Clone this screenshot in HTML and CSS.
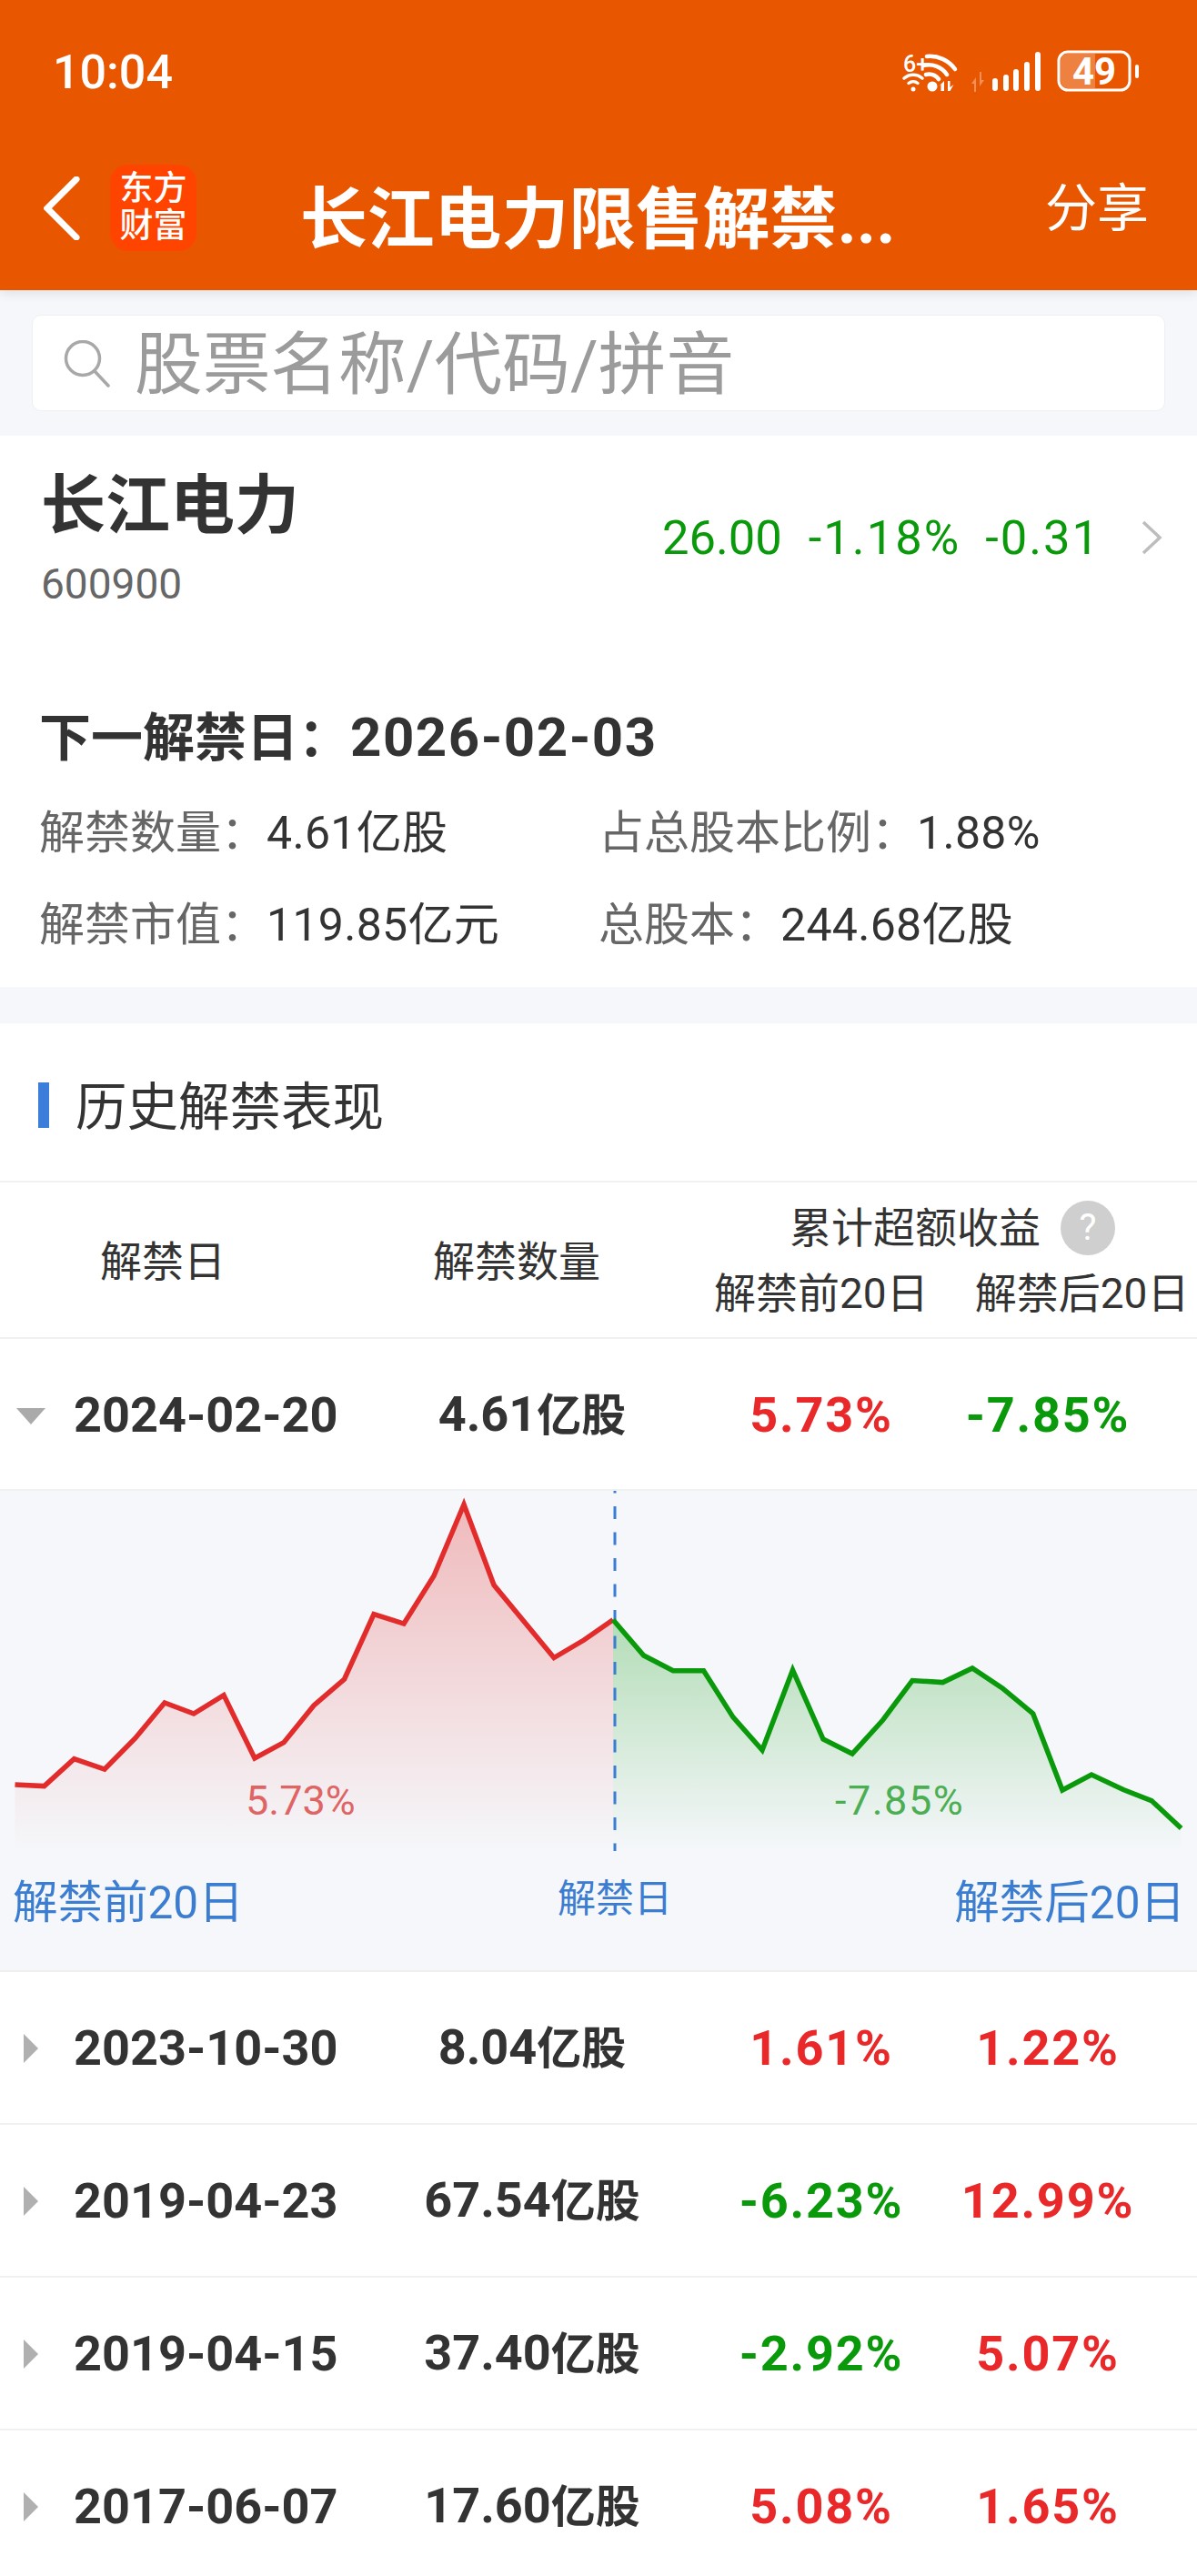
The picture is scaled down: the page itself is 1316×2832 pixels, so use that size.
FILE: index.html
```html
<!DOCTYPE html>
<html lang="zh-CN">
<head>
<meta charset="utf-8">
<title>长江电力限售解禁</title>
<link rel="stylesheet" href="styles.css">
</head>
<body>
<header class="top">
  <div class="status">
    <span class="time">10:04</span>
    <div class="status-icons">
      <svg class="ico-wifi" width="59" height="43" viewBox="0 0 59 43">
        <text x="0" y="21" class="wifi-text">6+</text>
        <g fill="none" stroke="#fff" stroke-linecap="round">
          <path d="M1 28a15 15 0 0 1 20 0" stroke-width="3.500"/>
          <path d="M6 33.500a8 8 0 0 1 10 0" stroke-width="3.500"/>
          <path d="M26 4a34 34 0 0 1 31 14" stroke-width="4.500"/>
          <path d="M22 14a24 24 0 0 1 26 10" stroke-width="4.500"/>
          <path d="M25 24a14 14 0 0 1 14 5" stroke-width="4.500"/>
        </g>
        <circle cx="11" cy="40" r="2.500" fill="#fff"/>
        <circle cx="32" cy="37" r="5.500" fill="#fff"/>
        <path d="M45 31v11h-3.500v-7l-2.500 2zM49 31h2.500v7l4-3-4 7H49z" fill="#fff"/>
      </svg>
      <svg class="ico-signal" width="76" height="44" viewBox="0 0 76 44">
        <path d="M5 44V28l-5 7h3v9zM9 22v16l5-7h-3v-9z" fill="#fff" opacity=".35"/>
        <rect x="23" y="29" width="6" height="14" rx="3" fill="#fff"/>
        <rect x="35" y="25" width="6" height="18" rx="3" fill="#fff"/>
        <rect x="46" y="19" width="6" height="24" rx="3" fill="#fff"/>
        <rect x="58" y="11" width="6" height="32" rx="3" fill="#fff"/>
        <rect x="70" y="0" width="6" height="43" rx="3" fill="#fff"/>
      </svg>
      <svg class="ico-battery" width="90" height="46" viewBox="0 0 90 46">
        <rect x="2" y="2" width="78" height="42" rx="10" fill="none" stroke="#fff" stroke-width="3"/>
        <path d="M4 12a8 8 0 0 1 8-8h30v38H12a8 8 0 0 1-8-8z" fill="#fff" opacity=".25"/>
        <text x="41" y="38" class="battery-text">49</text>
        <rect x="86" y="16" width="4" height="15" rx="2" fill="#fff"/>
      </svg>
    </div>
  </div>
  <nav class="nav">
    <svg class="back" width="40" height="70" viewBox="0 0 40 70"><path d="M36 3 4 35l32 32" fill="none" stroke="#fff" stroke-width="7" stroke-linecap="round" stroke-linejoin="miter"/></svg>
    <div class="logo">东方<br>财富</div>
    <h1 class="title">长江电力限售解禁...</h1>
    <span class="share">分享</span>
  </nav>
</header>

<div class="search-wrap">
  <div class="search">
    <svg class="search-ico" width="52" height="52" viewBox="0 0 52 52"><circle cx="21" cy="20" r="18.500" fill="none" stroke="#a8a8a8" stroke-width="3.500"/><path d="M34 34 49 50" stroke="#a8a8a8" stroke-width="3.500" stroke-linecap="round"/></svg>
    <span class="search-text">股票名称/代码/拼音</span>
  </div>
</div>

<section class="stock">
  <div class="stock-head">
    <div>
      <div class="stock-name">长江电力</div>
      <div class="stock-code">600900</div>
    </div>
    <div class="quote">
      <span>26.00</span><span class="neg">-1.18%</span><span class="neg">-0.31</span>
      <svg class="quote-arrow" width="24" height="38" viewBox="0 0 24 38"><path d="M3 2l18 17L3 36" fill="none" stroke="#bdbdbd" stroke-width="3.500"/></svg>
    </div>
  </div>
  <div class="next">下一解禁日：<span class="next-date">2026-02-03</span></div>
  <div class="facts">
    <div class="fact"><span class="fact-k">解禁数量：</span>4.61亿股</div>
    <div class="fact"><span class="fact-k">占总股本比例：</span>1.88%</div>
    <div class="fact"><span class="fact-k">解禁市值：</span>119.85亿元</div>
    <div class="fact"><span class="fact-k">总股本：</span>244.68亿股</div>
  </div>
</section>

<section class="history">
  <h2 class="sec-title"><i class="sec-bar"></i>历史解禁表现</h2>
  <div class="thead">
    <div class="th-center">解禁日</div>
    <div class="th-center">解禁数量</div>
    <div class="th-group">
      <div class="th-top">累计超额收益<span class="help">?</span></div>
      <div class="th-sub"><span>解禁前20日</span><span>解禁后20日</span></div>
    </div>
  </div>

  <div class="row row-open">
    <div class="cell-date"><i class="tri-down"></i>2024-02-20</div>
    <div class="cell-num">4.61<span class="unit">亿股</span></div>
    <div class="cell-num up">5.73%</div>
    <div class="cell-num down">-7.85%</div>
  </div>

  <div class="chart">
    <svg class="chart-svg" width="1316" height="396" viewBox="0 2 1316 396">
      <defs>
        <linearGradient id="gr" x1="0" y1="0" x2="0" y2="1"><stop offset="0" stop-color="#e22b2b" stop-opacity=".3"/><stop offset="1" stop-color="#e22b2b" stop-opacity="0"/></linearGradient>
        <linearGradient id="gg" x1="0" y1="0" x2="0" y2="1"><stop offset="0" stop-color="#0a990a" stop-opacity=".28"/><stop offset="1" stop-color="#0a990a" stop-opacity="0"/></linearGradient>
      </defs>
      <polygon fill="url(#gr)" points="16.500,398 16.500,325 48.600,326.600 81.500,296.600 115,308 148.700,274 181,235 213,247 246,226.600 280,296 312,278.700 345,238 378.600,209 411,137.600 444,148 477,95.500 510,17 543,105.500 576,145.500 609,185.500 642,166 674,143.700 674,398"/>
      <polygon fill="url(#gg)" points="674,398 674,143.700 707.700,183 740,199.800 773.600,199.800 806,250.900 838,287 871.500,199 905,275 937,291 970.600,254 1003,210.500 1036.500,212.600 1069,197 1102,219 1135.700,247 1168,331 1200,314 1235,330.500 1266,342.600 1298.600,373 1298.600,398"/>
      <line class="mid-line" x1="676" y1="2" x2="676" y2="398"/>
      <polyline class="line-red" points="16.500,325 48.600,326.600 81.500,296.600 115,308 148.700,274 181,235 213,247 246,226.600 280,296 312,278.700 345,238 378.600,209 411,137.600 444,148 477,95.500 510,17 543,105.500 576,145.500 609,185.500 642,166 674,143.700"/>
      <polyline class="line-green" points="674,143.700 707.700,183 740,199.800 773.600,199.800 806,250.900 838,287 871.500,199 905,275 937,291 970.600,254 1003,210.500 1036.500,212.600 1069,197 1102,219 1135.700,247 1168,331 1200,314 1235,330.500 1266,342.600 1298.600,373"/>
      <text class="lbl-red" x="270" y="358">5.73%</text>
      <text class="lbl-green" x="918" y="358">-7.85%</text>
    </svg>
    <div class="axis">
      <span class="axis-l">解禁前20日</span>
      <span class="axis-m">解禁日</span>
      <span class="axis-r">解禁后20日</span>
    </div>
  </div>

  <div class="row">
    <div class="cell-date"><i class="tri-right"></i>2023-10-30</div>
    <div class="cell-num">8.04<span class="unit">亿股</span></div>
    <div class="cell-num up">1.61%</div>
    <div class="cell-num up">1.22%</div>
  </div>
  <div class="row">
    <div class="cell-date"><i class="tri-right"></i>2019-04-23</div>
    <div class="cell-num">67.54<span class="unit">亿股</span></div>
    <div class="cell-num down">-6.23%</div>
    <div class="cell-num up">12.99%</div>
  </div>
  <div class="row">
    <div class="cell-date"><i class="tri-right"></i>2019-04-15</div>
    <div class="cell-num">37.40<span class="unit">亿股</span></div>
    <div class="cell-num down">-2.92%</div>
    <div class="cell-num up">5.07%</div>
  </div>
  <div class="row">
    <div class="cell-date"><i class="tri-right"></i>2017-06-07</div>
    <div class="cell-num">17.60<span class="unit">亿股</span></div>
    <div class="cell-num up">5.08%</div>
    <div class="cell-num up">1.65%</div>
  </div>
</section>
</body>
</html>
```
FILE: styles.css
```css
* { box-sizing: border-box; }
html, body { margin: 0; padding: 0; }
body {
  width: 1316px;
  height: 2832px;
  overflow: hidden;
  background: #f5f7fa;
  color: #333;
  font-family: Roboto, "Noto Sans CJK SC", sans-serif;
}

/* top bar */
.top {
  position: relative;
  z-index: 2;
  height: 319px;
  background: #e85600;
  color: #fff;
  box-shadow: 0 3px 12px rgba(0, 0, 0, .1);
}
.status {
  height: 158px;
  padding: 0 64px 0 58px;
  display: flex;
  align-items: center;
}
.time { font-size: 52px; font-weight: 500; }
.status-icons {
  margin-left: auto;
  display: flex;
  align-items: flex-end;
  gap: 16px;
  padding-bottom: 2px;
}
.status-icons svg { overflow: visible; }
.ico-signal { margin-right: 2px; }
.wifi-text { font: 500 25px Roboto, sans-serif; fill: #fff; }
.battery-text { font: 700 42px Roboto, sans-serif; fill: #fff; text-anchor: middle; }
.nav {
  height: 161px;
  padding: 0 53px 20px 48px;
  display: flex;
  align-items: center;
}
.back { flex: none; }
.logo {
  flex: none;
  width: 95px;
  height: 95px;
  margin-left: 33px;
  border-radius: 20px;
  background: #ff4400;
  font-size: 37px;
  font-weight: 500;
  line-height: 41px;
  text-align: center;
  padding-top: 6px;
}
.title {
  margin: 26px 0 0 114px;
  font-size: 73.800px;
  font-weight: 700;
  line-height: 80px;
  white-space: nowrap;
}
.share { margin: 2px 0 0 auto; font-size: 57px; line-height: 70px; }

/* search */
.search-wrap { padding: 27px 35px; }
.search {
  height: 106px;
  padding-left: 34px;
  display: flex;
  align-items: center;
  background: #fff;
  border: 1px solid #eef0f3;
  border-radius: 10px;
}
.search-ico { flex: none; margin-top: 2px; }
.search-text { margin: 6px 0 0 26px; font-size: 74.700px; color: #9b9b9b; line-height: 100px; white-space: nowrap; }

/* stock block */
.stock {
  height: 606px;
  padding: 35px 38px 0 43px;
  background: #fff;
}
.stock-head { display: flex; align-items: center; justify-content: space-between; }
.stock-name { font-size: 71px; font-weight: 700; line-height: 80px; margin-top: 2px; padding-left: 2px; }
.stock-code { margin-top: 21px; padding-left: 2px; font-size: 46px; line-height: 50px; color: #666; }
.quote { display: flex; align-items: center; gap: 29px; font-size: 52.500px; color: #0a990a; }
.neg { letter-spacing: 2px; margin-right: -2px; }
.quote-arrow { margin-left: 17px; }
.next { margin-top: 109px; font-size: 57px; font-weight: 700; line-height: 70px; white-space: nowrap; }
.next-date { font-size: 60px; letter-spacing: 1.500px; }
.facts { margin-top: 39px; display: grid; grid-template-columns: 615px 1fr; row-gap: 41px; }
.fact { font-size: 50px; line-height: 60px; white-space: nowrap; letter-spacing: .3px; }
.fact-k { color: #666; letter-spacing: 0; }

/* history */
.history { margin-top: 40px; background: #fff; }
.sec-title {
  height: 175px;
  margin: 0;
  padding: 0 0 0 42px;
  display: flex;
  align-items: center;
  font-size: 56.500px;
  font-weight: 400;
  border-bottom: 2px solid #f1f1f1;
}
.sec-bar { width: 12px; height: 50px; margin: 6px 29px 0 0; background: #3b7dd8; }
.thead {
  height: 172px;
  display: grid;
  grid-template-columns: 358px 420px 538px;
  align-items: center;
  font-size: 46px;
  border-bottom: 2px solid #f1f1f1;
}
.th-center { text-align: center; margin-top: -4px; }
.th-top {
  display: flex;
  align-items: center;
  justify-content: center;
  gap: 22px;
  height: 62px;
  line-height: 62px;
  white-space: nowrap;
}
.help {
  width: 60px;
  height: 60px;
  border-radius: 50%;
  background: #cfcfcf;
  color: #fff;
  font-size: 40px;
  line-height: 60px;
  text-align: center;
}
.th-sub {
  margin-top: 11px;
  padding-left: 7px;
  display: flex;
  gap: 51px;
  line-height: 60px;
  white-space: nowrap;
}
.row {
  height: 168px;
  padding-top: 2px;
  display: grid;
  grid-template-columns: 420px 330px 306px 192px;
  align-items: center;
  font-size: 54px;
  line-height: 60px;
  font-weight: 700;
  border-bottom: 2px solid #f1f1f1;
  white-space: nowrap;
}
.row-open { height: 167px; }
.cell-date { position: relative; padding-left: 81px; }
.cell-num { text-align: center; }
.up, .down { letter-spacing: 1.800px; }
.unit { font-size: 49px; }
.up { color: #e9282a; }
.down { color: #0a990a; }
.tri-right {
  position: absolute;
  left: 26px;
  top: 50%;
  margin-top: -16px;
  border-left: 16px solid #b0b0b0;
  border-top: 16px solid transparent;
  border-bottom: 16px solid transparent;
}
.tri-down {
  position: absolute;
  left: 18px;
  top: 50%;
  margin-top: -8px;
  border-top: 18px solid #aaa;
  border-left: 16px solid transparent;
  border-right: 16px solid transparent;
}

/* chart */
.chart { height: 529px; background: #f5f7fa; border-bottom: 2px solid #efefef; }
.chart-svg { display: block; }
.mid-line { stroke: #3b7dd0; stroke-width: 3; stroke-dasharray: 14 14.500; stroke-dashoffset: 11.500; }
.line-red, .line-green { fill: none; stroke-width: 5.500; stroke-linejoin: miter; }
.line-red { stroke: #e22b2b; }
.line-green { stroke: #0a990a; }
.lbl-red, .lbl-green { font: 400 45px Roboto, sans-serif; }
.lbl-red { fill: #e06464; }
.lbl-green { fill: #4cae52; letter-spacing: 1.500px; }
.axis {
  display: grid;
  grid-template-columns: 599px 1fr auto;
  padding: 27px 13px 0 14px;
  color: #3b7dd0;
  font-size: 49.500px;
  line-height: 60px;
  white-space: nowrap;
}
.axis-m { font-size: 42px; line-height: 52px; }
```
